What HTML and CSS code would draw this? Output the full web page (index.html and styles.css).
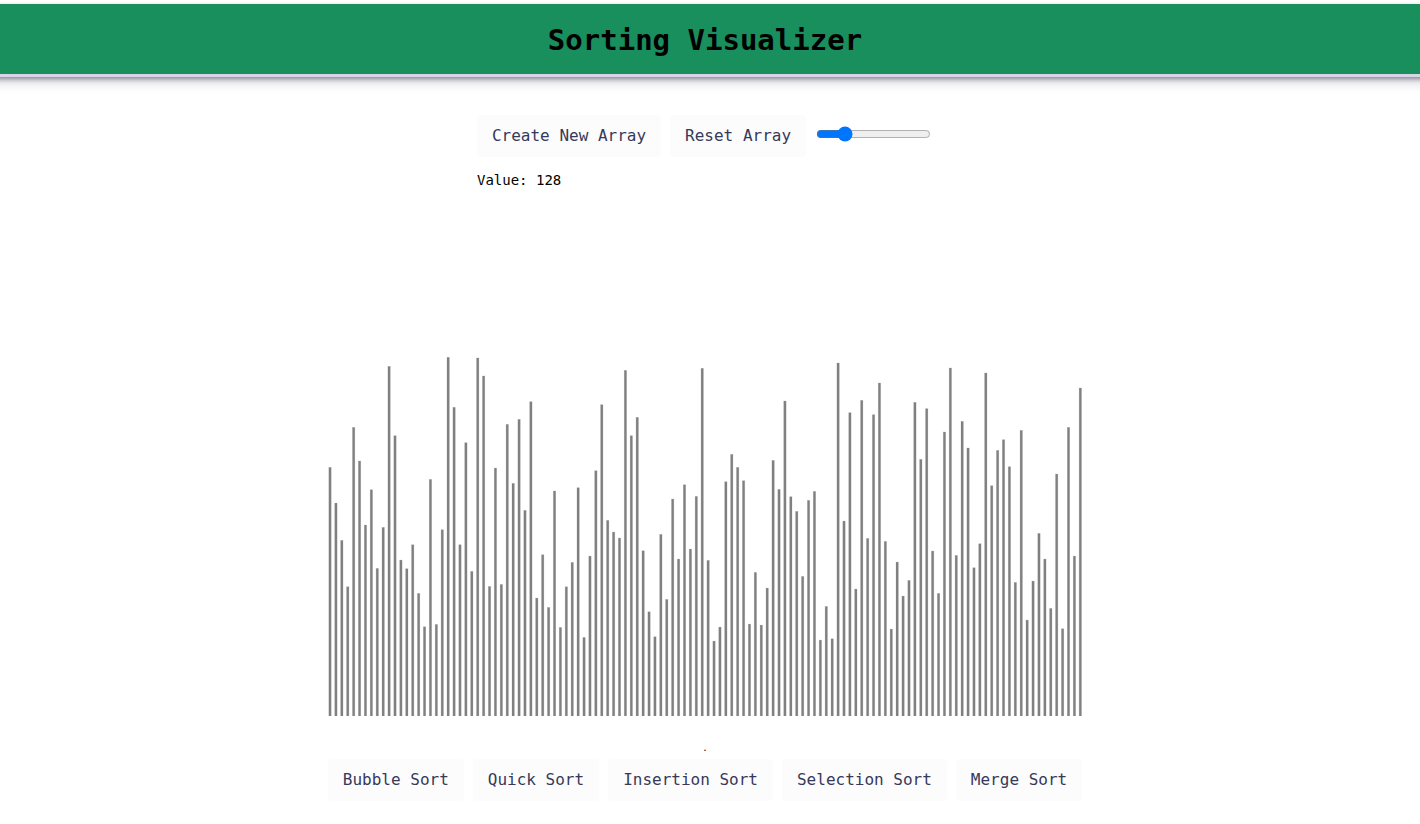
FILE: index.html
```html
<!DOCTYPE html>
<html lang="en">
<head>
<meta charset="utf-8">
<title>Sorting Visualizer</title>
<link rel="stylesheet" href="styles.css">
</head>
<body>
<header class="header"><h1 class="title">Sorting Visualizer</h1></header>
<main class="main">
  <section class="controls">
    <div class="row">
      <button class="btn" type="button">Create New Array</button>
      <button class="btn" type="button">Reset Array</button>
      <input class="slider" id="size" type="range" min="4" max="600" value="128" aria-label="Array size">
    </div>
    <label class="value" for="size">Value: <span id="count">128</span></label>
  </section>
  <section class="board">
    <svg class="chart" id="chart" viewBox="0 0 2262 1128" role="img" aria-label="Array bars"></svg>
    <p class="status">.</p>
    <div class="row">
      <button class="btn" type="button">Bubble Sort</button>
      <button class="btn" type="button">Quick Sort</button>
      <button class="btn" type="button">Insertion Sort</button>
      <button class="btn" type="button">Selection Sort</button>
      <button class="btn" type="button">Merge Sort</button>
    </div>
  </section>
</main>
<script src="script.js"></script>
</body>
</html>
```
FILE: styles.css
```css
body {
  margin: 0;
  padding-top: 4px;
  background: #fff;
  font-family: "DejaVu Sans Mono", monospace;
  overflow-x: hidden;
}

.header {
  margin: 0 -16px;
  padding: 19px 26px 20px 16px;
  background: #198f5d;
  box-shadow: rgba(45, 35, 66, 0.4) 0 2px 4px,
    rgba(45, 35, 66, 0.3) 0 6px 12px -3px,
    #d6d6e7 0 -3px 0 inset;
  text-align: center;
}

.title {
  margin: 0;
  font-size: 29px;
  line-height: 34px;
}

.main {
  display: flex;
  flex-direction: column;
  align-items: center;
  padding: 38px 10px 20px 0;
}

.controls {
  display: flex;
  flex-direction: column;
  align-items: flex-start;
}

.row {
  display: flex;
  gap: 9px;
}

.btn {
  height: 42px;
  padding: 0 15px;
  border: 0;
  border-radius: 4px;
  background: #fcfcfd;
  color: #36395a;
  font-family: inherit;
  font-size: 16px;
  line-height: 18px;
  white-space: nowrap;
}

.slider {
  width: 115px;
  height: 14px;
  margin: 12px 2px 0 1px;
}

.value {
  margin-top: 14px;
  font-size: 14px;
  line-height: 18px;
}

.board {
  display: flex;
  flex-direction: column;
  align-items: stretch;
  margin-top: 151px;
}

.chart {
  display: block;
  width: 100%;
}

.bar {
  fill: #808080;
  stroke: #d8d8d8;
  stroke-width: 2px;
  paint-order: stroke;
}

.status {
  margin: 28px 0 6px;
  font-size: 9px;
  line-height: 9px;
  text-align: center;
}
```
FILE: script.js
```js
// Top edge of every bar, in chart units measured down from the chart's top.
const tops = [
  382, 489, 601, 740, 262, 363, 555, 449, 685, 562, 79, 287, 660, 686, 614, 760,
  860, 418, 853, 569, 52, 202, 614, 308, 694, 54, 108, 739, 384, 733, 253, 430,
  238, 511, 185, 774, 644, 802, 453, 862, 740, 667, 443, 892, 648, 392, 194, 541,
  576, 594, 91, 287, 232, 632, 815, 890, 583, 778, 477, 657, 434, 627, 469, 85,
  661, 903, 861, 425, 343, 382, 422, 852, 697, 855, 744, 361, 448, 183, 470, 514,
  709, 481, 454, 900, 799, 896, 69, 543, 218, 747, 181, 595, 224, 129, 604, 867,
  666, 768, 721, 187, 358, 206, 633, 760, 276, 84, 646, 244, 324, 683, 611, 99,
  437, 331, 299, 380, 727, 271, 840, 723, 580, 657, 805, 402, 866, 262, 648, 144
];
const floor = 1128;
const barWidth = 7;
const firstCenter = 6;
const pitch = 2250 / (tops.length - 1);
const chart = document.getElementById("chart");

tops.forEach((top, i) => {
  const bar = document.createElementNS("http://www.w3.org/2000/svg", "rect");
  bar.setAttribute("class", "bar");
  bar.setAttribute("x", firstCenter + i * pitch - barWidth / 2);
  bar.setAttribute("y", top);
  bar.setAttribute("width", barWidth);
  bar.setAttribute("height", floor - top);
  chart.appendChild(bar);
});

document.getElementById("size").addEventListener("input", (event) => {
  document.getElementById("count").textContent = event.target.value;
});
```
